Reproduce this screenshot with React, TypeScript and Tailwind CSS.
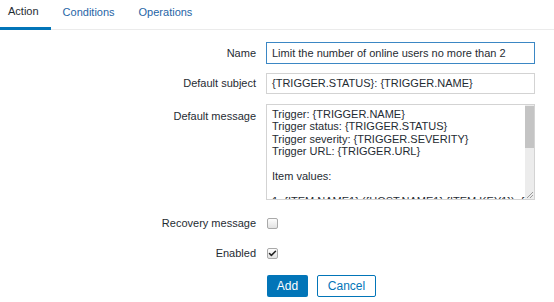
import { Check } from 'lucide-react'

const tabs = ['Action', 'Conditions', 'Operations']

const message = [
  'Trigger: {TRIGGER.NAME}',
  'Trigger status: {TRIGGER.STATUS}',
  'Trigger severity: {TRIGGER.SEVERITY}',
  'Trigger URL: {TRIGGER.URL}',
  '',
  'Item values:',
  '',
  '1. {ITEM.NAME1} ({HOST.NAME1}:{ITEM.KEY1}): {ITEM.VALUE1}',
]

function Box({ checked }: { checked?: boolean }) {
  return (
    <span className="grid h-[11px] w-[11px] place-items-center rounded-[2px] border border-[#a9a9a9] bg-gradient-to-b from-[#fdfdfd] to-[#e2e2e2]">
      {checked && <Check size={9} strokeWidth={4} className="text-[#222]" />}
    </span>
  )
}

export default function App() {
  return (
    <div
      className="h-[302px] w-[554px] overflow-hidden bg-white text-[11px] text-[#1f2c33]"
      style={{ fontFamily: '"Liberation Sans", Arial, sans-serif' }}
    >
      <nav className="flex h-[30px] border-b border-[#ebebeb]">
        {tabs.map((t, i) => (
          <div
            key={t}
            className={`flex items-center pb-[4px] ${
              i === 0
                ? 'border-b-[3px] border-[#0275b8] pl-[8px] pr-[12px] -mb-px'
                : 'px-[12px] text-[#1f65a6]'
            }`}
          >
            {t}
          </div>
        ))}
      </nav>

      <div className="grid grid-cols-[256px_269px] gap-x-[10px] pt-[12px]">
        <div className="flex h-[22px] items-center justify-end">Name</div>
        <div className="flex h-[22px] items-center border border-[#3b87c4] px-[5px]">
          Limit the number of online users no more than 2
        </div>

        <div className="mt-[9px] flex h-[21px] items-center justify-end">Default subject</div>
        <div className="mt-[9px] flex h-[21px] items-center border border-[#d3d3d3] px-[5px]">
          {'{TRIGGER.STATUS}: {TRIGGER.NAME}'}
        </div>

        <div className="mt-[10px] pt-[4px] text-right">Default message</div>
        <div className="mt-[10px] flex h-[96px] overflow-hidden border border-[#d3d3d3]">
          <div className="flex-1 overflow-hidden whitespace-pre pl-[5px] pt-[3px] leading-[12.4px]">
            {message.map((l, i) => (
              <div key={i} className="h-[12.4px]">
                {l}
              </div>
            ))}
          </div>
          <div className="flex w-[9px] flex-col bg-[#ececec]">
            <div className="mt-[1px] h-[42px] bg-[#c4c4c4]" />
            <div className="flex-1" />
            <svg width="9" height="9" viewBox="0 0 9 9" className="text-[#9a9a9a]">
              <path d="M8 2 L2 8 M8 5 L5 8" stroke="currentColor" strokeWidth="1" />
            </svg>
          </div>
        </div>

        <div className="mt-[18px] flex h-[11px] items-center justify-end">Recovery message</div>
        <div className="mt-[18px] flex h-[11px] items-center pl-px">
          <Box />
        </div>

        <div className="mt-[19px] flex h-[11px] items-center justify-end">Enabled</div>
        <div className="mt-[19px] flex h-[11px] items-center pl-px">
          <Box checked />
        </div>

        <div />
        <div className="mt-[16px] flex gap-[9px] pl-px">
          <button className="h-[22px] w-[41px] rounded-[2px] bg-[#0275b8] text-[12px] text-white">
            Add
          </button>
          <button className="h-[22px] w-[59px] rounded-[2px] border border-[#0275b8] bg-white text-[12px] text-[#0275b8]">
            Cancel
          </button>
        </div>
      </div>
    </div>
  )
}
